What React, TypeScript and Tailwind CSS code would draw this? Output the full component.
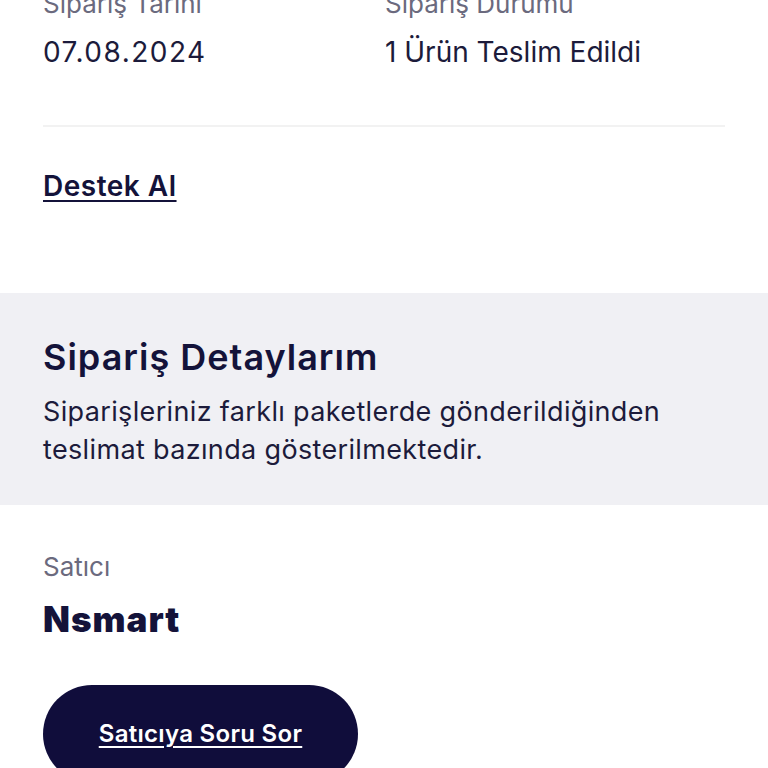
import React from "react";

export default function App() {
  return (
    <div className="w-[768px] h-[768px] overflow-hidden bg-white" style={{ fontFamily: "Inter, 'Noto Sans', sans-serif" }}>
      <div className="px-[43px] mt-[-14px]">
        <div className="flex">
          <div className="w-[342px]">
            <div className="text-[26px] leading-[36px] text-[#6b6a7e]">Sipariş Tarihi</div>
            <div className="mt-[12px] text-[28px] leading-[36px] tracking-[1.5px] text-[#1c1b3b]">07.08.2024</div>
          </div>
          <div>
            <div className="text-[26px] leading-[36px] text-[#6b6a7e]">Sipariş Durumu</div>
            <div className="mt-[12px] text-[28px] leading-[36px] text-[#1c1b3b]">1 Ürün Teslim Edildi</div>
          </div>
        </div>
        <div className="mt-[55px] h-[2px] bg-[#f2f2f2]" />
        <div className="mt-[41px] mb-[89px]">
          <a className="text-[28px] leading-[36px] font-semibold tracking-[0.5px] text-[#14133a] underline underline-offset-[4px] decoration-[2px]">Destek Al</a>
        </div>
      </div>
      <div className="bg-[#f0f0f4] px-[43px] pt-[42px] pb-[36px]">
        <div className="text-[36px] leading-[44px] font-semibold tracking-[1px] text-[#14133a]">Sipariş Detaylarım</div>
        <div className="mt-[14px] text-[27px] leading-[38px] tracking-[0.35px] text-[#1c1b3b]">
          Siparişleriniz farklı paketlerde gönderildiğinden
          <br />
          teslimat bazında gösterilmektedir.
        </div>
      </div>
      <div className="px-[43px]">
        <div className="mt-[44px] text-[26px] leading-[36px] text-[#6b6a7e]">Satıcı</div>
        <div className="mt-[14px] text-[35px] leading-[40px] font-black tracking-[1px] text-[#14133a]">Nsmart</div>
        <button className="mt-[46px] w-[315px] h-[98px] rounded-full bg-[#100d3b] text-white text-[24px] font-semibold tracking-[0.3px] underline underline-offset-[4px] decoration-[2px]">
          Satıcıya Soru Sor
        </button>
      </div>
    </div>
  );
}
